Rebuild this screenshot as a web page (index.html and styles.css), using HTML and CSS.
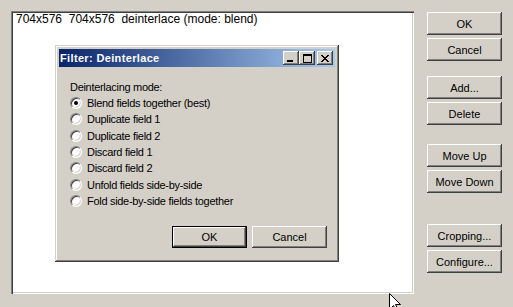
FILE: index.html
```html
<!DOCTYPE html>
<html lang="en">
<head>
  <meta charset="UTF-8" />
  <title>Filters</title>
  <link rel="stylesheet" href="styles.css">
</head>
<body>
  <div class="window">
    <div class="filter-list">
      <div class="filter-row">704x576  704x576  deinterlace (mode: blend)</div>
    </div>
    <div class="side-buttons">
      <div class="btn-group group-top">
        <button class="btn">OK</button>
        <button class="btn">Cancel</button>
      </div>
      <div class="btn-group group-edit">
        <button class="btn">Add...</button>
        <button class="btn">Delete</button>
      </div>
      <div class="btn-group group-move">
        <button class="btn">Move Up</button>
        <button class="btn">Move Down</button>
      </div>
      <div class="btn-group group-config">
        <button class="btn">Cropping...</button>
        <button class="btn">Configure...</button>
      </div>
    </div>
  </div>

  <div class="dialog">
    <div class="title-bar">
      <span class="title-text">Filter: Deinterlace</span>
      <div class="title-buttons">
        <span class="tbtn">
          <svg width="8" height="7" viewBox="0 0 8 7"><rect x="0" y="5" width="6" height="2" fill="#000"/></svg>
        </span>
        <span class="tbtn tbtn-max">
          <svg width="9" height="9" viewBox="0 0 9 9"><path d="M0 0h9v9h-9z M1 2v6h7v-6z" fill="#000" fill-rule="evenodd"/></svg>
        </span>
        <span class="tbtn tbtn-close">
          <svg width="8" height="7" viewBox="0 0 8 7" shape-rendering="crispEdges">
            <path d="M0 0h2v1h-2z M6 0h2v1h-2z M1 1h2v1h-2z M5 1h2v1h-2z M2 2h4v1h-4z M3 3h2v1h-2z M2 4h4v1h-4z M1 5h2v1h-2z M5 5h2v1h-2z M0 6h2v1h-2z M6 6h2v1h-2z" fill="#000"/>
          </svg>
        </span>
      </div>
    </div>
    <div class="dialog-body">
      <div class="group-label">Deinterlacing mode:</div>
      <div class="radio-list">
        <label class="radio-row"><span class="radio checked"></span>Blend fields together (best)</label>
        <label class="radio-row"><span class="radio"></span>Duplicate field 1</label>
        <label class="radio-row"><span class="radio"></span>Duplicate field 2</label>
        <label class="radio-row"><span class="radio"></span>Discard field 1</label>
        <label class="radio-row"><span class="radio"></span>Discard field 2</label>
        <label class="radio-row"><span class="radio"></span>Unfold fields side-by-side</label>
        <label class="radio-row"><span class="radio"></span>Fold side-by-side fields together</label>
      </div>
      <div class="dialog-buttons">
        <button class="btn btn-default">OK</button>
        <button class="btn">Cancel</button>
      </div>
    </div>
  </div>

  <svg class="cursor" width="12" height="19" viewBox="0 0 12 19">
    <path d="M0.5 0.5 L0.5 16.5 L4.5 12.5 L7.5 18.5 L9.5 17.5 L6.5 11.5 L11.5 11.5 Z" fill="#fff" stroke="#000" stroke-width="1"/>
  </svg>
</body>
</html>
```

FILE: styles.css
```css
html, body {
  margin: 0;
  padding: 0;
}
body {
  background: #d4d0c8;
  color: #000;
  font-family: "Liberation Sans", Arial, sans-serif;
  font-size: 11px;
  width: 513px;
  height: 307px;
  overflow: hidden;
  position: relative;
}
.window {
  display: flex;
  padding: 11px;
  gap: 13px;
}
.filter-list {
  width: 404px;
  height: 283px;
  box-sizing: border-box;
  background: #fff;
  padding: 1px 5px;
  box-shadow: inset 1px 1px #808080, inset 2px 2px #404040, inset -1px -1px #fff, inset -2px -2px #d4d0c8;
}
.filter-row {
  white-space: pre;
  font-size: 12px;
  line-height: 14px;
}
.side-buttons {
  display: flex;
  flex-direction: column;
  width: 75px;
  padding-top: 1px;
}
.btn-group {
  display: flex;
  flex-direction: column;
  gap: 3px;
}
.group-edit { margin-top: 15px; }
.group-move { margin-top: 19px; }
.group-config { margin-top: 31px; }
.btn {
  width: 75px;
  height: 23px;
  padding: 0;
  border: none;
  background: #d4d0c8;
  font-family: "Liberation Sans", Arial, sans-serif;
  font-size: 11px;
  color: #000;
  box-shadow: inset -1px -1px #404040, inset 1px 1px #fff, inset -2px -2px #808080, inset 2px 2px #d4d0c8;
}
.btn-default {
  box-shadow: inset 0 0 0 1px #000, inset -2px -2px #404040, inset 2px 2px #fff, inset -3px -3px #808080;
}

/* floating filter dialog */
.dialog {
  position: absolute;
  left: 55px;
  top: 45px;
  width: 284px;
  height: 217px;
  box-sizing: border-box;
  padding: 4px;
  background: #d4d0c8;
  box-shadow: inset -1px -1px #404040, inset 1px 1px #d4d0c8, inset -2px -2px #808080, inset 2px 2px #fff;
  display: flex;
  flex-direction: column;
}
.title-bar {
  height: 18px;
  display: flex;
  align-items: center;
  justify-content: space-between;
  background: linear-gradient(to right, #0a246a, #a6caf0);
  padding: 0 2px 0 1px;
}
.title-text {
  color: #fff;
  font-weight: bold;
  font-size: 11px;
  letter-spacing: 0.35px;
}
.title-buttons {
  display: flex;
}
.tbtn {
  width: 16px;
  height: 14px;
  box-sizing: border-box;
  background: #d4d0c8;
  display: flex;
  align-items: center;
  justify-content: center;
  box-shadow: inset -1px -1px #404040, inset 1px 1px #fff, inset -2px -2px #808080, inset 2px 2px #d4d0c8;
}
.tbtn svg { display: block; }
.tbtn-close { margin-left: 2px; }
.dialog-body {
  flex: 1;
  padding: 14px 8px 0 11px;
  display: flex;
  flex-direction: column;
}
.group-label {
  line-height: 13px;
  letter-spacing: -0.3px;
}
.radio-list {
  margin-top: 1px;
  display: flex;
  flex-direction: column;
}
.radio-row {
  height: 16.33px;
  display: flex;
  align-items: center;
  gap: 5px;
  letter-spacing: -0.3px;
}
.radio {
  width: 12px;
  height: 12px;
  box-sizing: border-box;
  border-radius: 50%;
  background: #fff;
  border: 1px solid;
  border-color: #808080 #fff #fff #808080;
  box-shadow: inset 1px 1px #404040, inset -1px -1px #d4d0c8;
  position: relative;
}
.radio.checked::after {
  content: "";
  position: absolute;
  left: 3px;
  top: 3px;
  width: 4px;
  height: 4px;
  border-radius: 50%;
  background: #000;
}
.dialog-buttons {
  margin-top: 17px;
  display: flex;
  justify-content: flex-end;
  gap: 5px;
}
.dialog-buttons .btn {
  height: 22px;
}
.cursor {
  position: absolute;
  left: 389px;
  top: 293px;
}
```
